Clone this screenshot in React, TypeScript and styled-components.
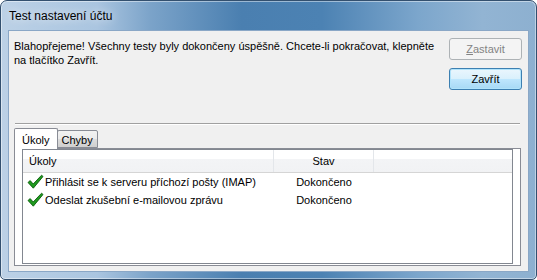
import React from "react"
import styled, { createGlobalStyle } from "styled-components"

const GlobalStyle = createGlobalStyle`
  html, body {
    margin: 0;
    padding: 0;
    background: #ffffff;
  }
  body {
    font-family: "Liberation Sans", Arial, sans-serif;
    font-size: 11px;
    color: #000;
  }
`

const Window = styled.div`
  box-sizing: border-box;
  width: 537px;
  height: 280px;
  display: flex;
  flex-direction: column;
  padding: 0 7px 7px 7px;
  border: 1px solid #33506f;
  border-radius: 7px 7px 5px 5px;
  background: linear-gradient(
    90deg,
    #bcd1e6 0%,
    #aac5e0 18%,
    #7ba3c9 28%,
    #4a7fb0 45%,
    #4c82b3 60%,
    #7ca6cc 78%,
    #92b4d3 90%,
    #8db0d0 100%
  );
  box-shadow: inset 0 0 0 1px rgba(255, 255, 255, 0.45);
  overflow: hidden;
`

const TitleBar = styled.div`
  height: 29px;
  display: flex;
  align-items: center;
  padding-left: 1px;
  font-size: 12px;
  color: #000;
  text-shadow: 0 0 8px rgba(255, 255, 255, 0.9);
`

const Client = styled.div`
  box-sizing: border-box;
  flex: 1;
  display: flex;
  flex-direction: column;
  background: #f0f0f0;
  border: 1px solid #8aa7c6;
  padding: 7px 6px 5px 5px;
`

const TopRow = styled.div`
  display: flex;
  align-items: flex-start;
  gap: 8px;
`

const Message = styled.p`
  flex: 1;
  margin: 0;
  padding-top: 1px;
  line-height: 14px;
`

const ButtonColumn = styled.div`
  display: flex;
  flex-direction: column;
  gap: 8px;
`

const Button = styled.button<{ $default?: boolean }>`
  box-sizing: border-box;
  width: 73px;
  height: 22px;
  padding: 0;
  font-family: inherit;
  font-size: 11px;
  border-radius: 3px;
  color: ${({ disabled }) => (disabled ? "#838383" : "#000")};
  border: 1px solid
    ${({ disabled, $default }) =>
      disabled ? "#adb2b5" : $default ? "#3c7fb1" : "#707070"};
  background: ${({ disabled, $default }) =>
    disabled
      ? "#f4f4f4"
      : $default
      ? "linear-gradient(#e5f4fc 0%, #c4e5f6 50%, #98d1ef 51%, #68b3db 100%)"
      : "linear-gradient(#f2f2f2 0%, #ebebeb 50%, #dddddd 51%, #cfcfcf 100%)"};
  box-shadow: ${({ disabled, $default }) =>
    disabled ? "none" : $default ? "inset 0 0 0 1px #b0e3fb" : "inset 0 0 0 1px #fcfcfc"};
  ${({ $default }) =>
    $default &&
    `background: linear-gradient(#eaf6fd 0%, #d9f0fc 50%, #bee6fd 51%, #a7d9f5 100%);`}
`

const Accel = styled.span`
  text-decoration: underline;
`

const Separator = styled.div`
  height: 1px;
  margin: 33px 2px 0 1px;
  background: #a0a0a0;
  border-bottom: 1px solid #ffffff;
`

const TabArea = styled.div`
  flex: 1;
  display: flex;
  flex-direction: column;
  margin: 3px 1px 0 0;
`

const TabStrip = styled.div`
  display: flex;
  align-items: flex-end;
  height: 20px;
  position: relative;
  z-index: 1;
`

const Tab = styled.div<{ $active?: boolean }>`
  box-sizing: border-box;
  height: ${({ $active }) => ($active ? "21px" : "18px")};
  padding: ${({ $active }) => ($active ? "4px 7px 0 7px" : "2px 4px 0 4px")};
  border: 1px solid #898c95;
  border-bottom: ${({ $active }) => ($active ? "none" : "1px solid #898c95")};
  border-radius: 2px 2px 0 0;
  margin-bottom: ${({ $active }) => ($active ? "-1px" : "0")};
  background: ${({ $active }) =>
    $active ? "#ffffff" : "linear-gradient(#f2f2f2 0%, #ebebeb 50%, #dddddd 51%, #cfcfcf 100%)"};
  margin-left: ${({ $active }) => ($active ? "0" : "-1px")};
  font-size: 11px;
  line-height: 14px;
`

const TabPanel = styled.div`
  box-sizing: border-box;
  flex: 1;
  display: flex;
  flex-direction: column;
  border: 1px solid #898c95;
  background: #ffffff;
  padding: 0 7px 1px 7px;
`

const ListBox = styled.div`
  flex: 1;
  border: 1px solid #828790;
  background: #ffffff;
  margin-top: 0;
`

const HeaderRow = styled.div`
  display: flex;
  height: 22px;
  background: linear-gradient(#ffffff 0%, #ffffff 40%, #f3f4f6 41%, #f1f2f4 100%);
  border-bottom: 1px solid #d5d5d5;
`

const HeaderCell = styled.div<{ $width?: number; $center?: boolean }>`
  box-sizing: border-box;
  display: flex;
  align-items: center;
  justify-content: ${({ $center }) => ($center ? "center" : "flex-start")};
  width: ${({ $width }) => ($width ? `${$width}px` : "auto")};
  flex: ${({ $width }) => ($width ? "none" : "1")};
  padding-left: ${({ $center }) => ($center ? "0" : "6px")};
  border-right: ${({ $width }) => ($width ? "1px solid #e3e6ea" : "none")};
`

const Row = styled.div`
  display: flex;
  height: 18px;
  align-items: center;
`

const TaskCell = styled.div`
  width: 251px;
  display: flex;
  align-items: center;
  padding-left: 4px;
  box-sizing: border-box;
  gap: 1px;
`

const StatusCell = styled.div`
  width: 100px;
  text-align: center;
`

const CheckIcon = () => (
  <svg width="17" height="16" viewBox="0 0 17 16">
    <path
      d="M1 8.5 L3.2 6.6 L6.2 10 L14.6 1.2 L16 2.5 L6.3 14.2 Z"
      fill="#1f9a1f"
      stroke="#0b5c0b"
      strokeWidth="0.9"
      strokeLinejoin="round"
    />
  </svg>
)

const tasks = [
  "Přihlásit se k serveru příchozí pošty (IMAP)",
  "Odeslat zkušební e-mailovou zprávu",
]

export default function App() {
  return (
    <>
      <GlobalStyle />
      <Window>
        <TitleBar>Test nastavení účtu</TitleBar>
        <Client>
          <TopRow>
            <Message>
              Blahopřejeme! Všechny testy byly dokončeny úspěšně. Chcete-li pokračovat, klepněte
              na tlačítko Zavřít.
            </Message>
            <ButtonColumn>
              <Button disabled>
                <Accel>Z</Accel>astavit
              </Button>
              <Button $default>Zavřít</Button>
            </ButtonColumn>
          </TopRow>
          <Separator />
          <TabArea>
            <TabStrip>
              <Tab $active>Úkoly</Tab>
              <Tab>Chyby</Tab>
            </TabStrip>
            <TabPanel>
              <ListBox>
                <HeaderRow>
                  <HeaderCell $width={251}>Úkoly</HeaderCell>
                  <HeaderCell $width={100} $center>
                    Stav
                  </HeaderCell>
                  <HeaderCell />
                </HeaderRow>
                {tasks.map((t) => (
                  <Row key={t}>
                    <TaskCell>
                      <CheckIcon />
                      {t}
                    </TaskCell>
                    <StatusCell>Dokončeno</StatusCell>
                  </Row>
                ))}
              </ListBox>
            </TabPanel>
          </TabArea>
        </Client>
      </Window>
    </>
  )
}
